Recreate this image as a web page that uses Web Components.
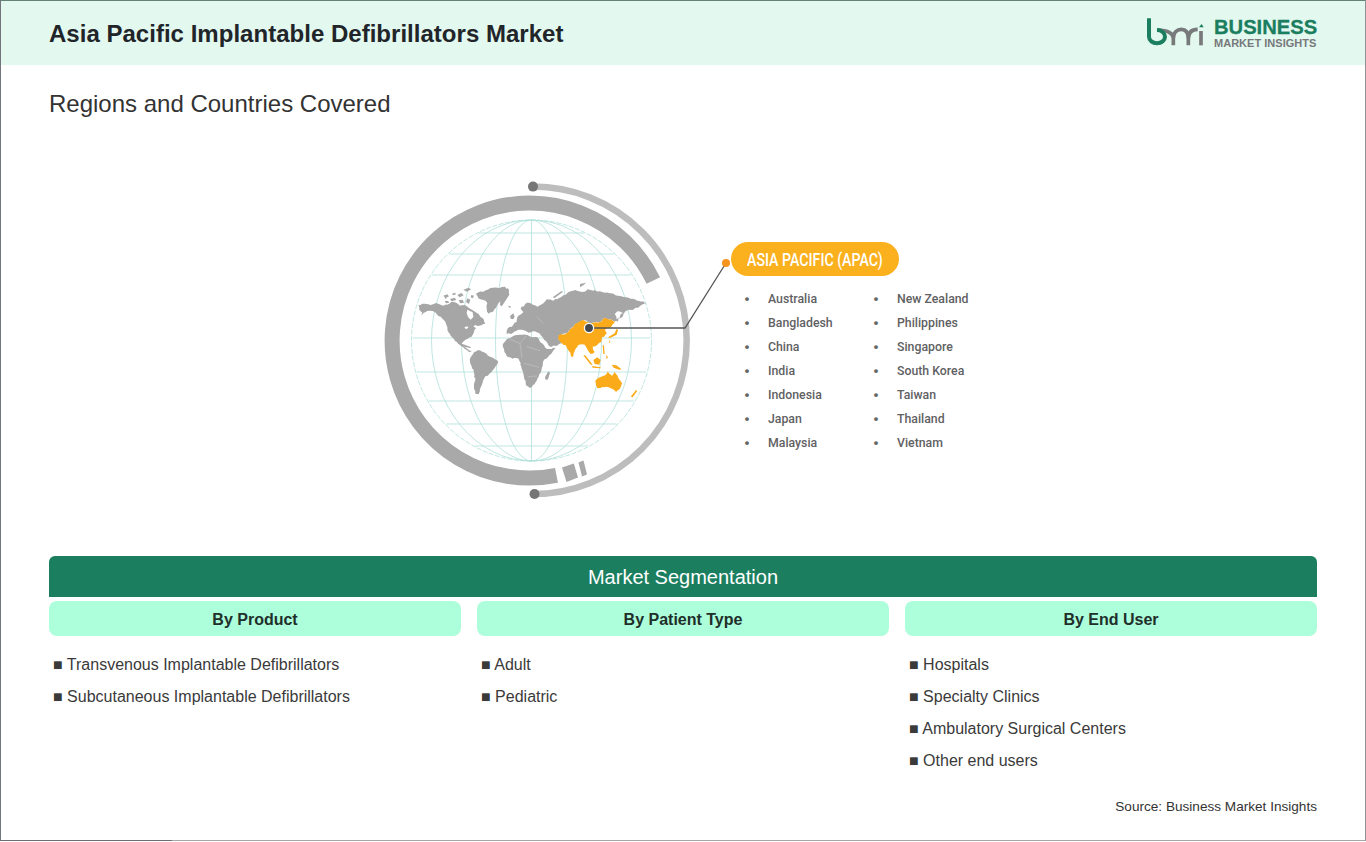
<!DOCTYPE html>
<html lang="en"><head><meta charset="utf-8"><title>Asia Pacific Implantable Defibrillators Market</title>
<style>html,body{margin:0;padding:0;background:#fff}body{font-family:"Liberation Sans",Arial,sans-serif}</style>
</head><body>
<report-app>
<report-header slot="header" title="Asia Pacific Implantable Defibrillators Market"></report-header>
<h-sub>Regions and Countries Covered</h-sub>
<region-map>
<span slot="pill">ASIA PACIFIC (APAC)</span>
<country-item>Australia</country-item><country-item>New Zealand</country-item>
<country-item>Bangladesh</country-item><country-item>Philippines</country-item>
<country-item>China</country-item><country-item>Singapore</country-item>
<country-item>India</country-item><country-item>South Korea</country-item>
<country-item>Indonesia</country-item><country-item>Taiwan</country-item>
<country-item>Japan</country-item><country-item>Thailand</country-item>
<country-item>Malaysia</country-item><country-item>Vietnam</country-item>
</region-map>
<seg-band>Market Segmentation</seg-band>
<seg-grid>
<seg-col heading="By Product"><seg-item>Transvenous Implantable Defibrillators</seg-item><seg-item>Subcutaneous Implantable Defibrillators</seg-item></seg-col>
<seg-col heading="By Patient Type"><seg-item>Adult</seg-item><seg-item>Pediatric</seg-item></seg-col>
<seg-col heading="By End User"><seg-item>Hospitals</seg-item><seg-item>Specialty Clinics</seg-item><seg-item>Ambulatory Surgical Centers</seg-item><seg-item>Other end users</seg-item></seg-col>
</seg-grid>
<source-note>Source: Business Market Insights</source-note>
</report-app>
<script>
function def(name, css, html){
  customElements.define(name, class extends HTMLElement{
    constructor(){super();const r=this.attachShadow({mode:'open'});
      r.innerHTML='<style>'+css+'</style>'+(typeof html==='function'?html(this):html);}
  });
}
def('report-app',`:host{display:block;box-sizing:border-box;width:1366px;height:842px;overflow:hidden;font-family:"Liberation Sans",Arial,sans-serif;color:#212529}
.f{position:relative;box-sizing:border-box;height:841px;border:1px solid #70767a;border-right-color:#8e9293;border-top-color:#66807a;border-bottom-color:#a4a8aa;display:flex;flex-direction:column}
.f::after{content:"";position:absolute;left:-1px;bottom:-1px;width:172px;height:1px;background:#6c7074}
.b{padding:0 48px;display:flex;flex-direction:column;flex:1}`,
`<div class="f"><slot name="header"></slot><div class="b"><slot></slot></div></div>`);

def('report-header',`:host{display:flex;align-items:center;justify-content:space-between;height:64px;background:#e3f8ef;padding:0 47px 0 48px;flex:none}
h1{margin:0;font-size:24px;line-height:32px;font-weight:700;color:#212529;position:relative;top:1px;letter-spacing:.02px}
.logo{display:flex;align-items:center;gap:9px}
.t{display:flex;flex-direction:column;width:104px;margin-top:-1px}
.a{font-size:20.2px;line-height:20px;font-weight:700;color:#1b7e5f;white-space:nowrap;-webkit-text-stroke:.3px #1b7e5f;position:relative;top:1px}
.c{font-size:11px;line-height:12px;font-weight:700;color:#77797b;white-space:nowrap;letter-spacing:.02px;margin-top:1px}
svg{display:block}`,
h=>`<h1>${h.getAttribute('title')}</h1><div class="logo">
<svg width="60" height="34" viewBox="0 0 180 102" fill="none">
<path d="M36 42C60 42 85 46 85 70V88M85 68C85 48 97 40 109 40S130 48 130 68V88M130 68C130 48 142 40 158 40" stroke="#77797b" stroke-width="11"/>
<path d="M168 45V88" stroke="#77797b" stroke-width="11"/>
<path d="M12 7V62A24 20 0 1 0 36 42" stroke="#1b7e5f" stroke-width="12"/>
<path d="M162 34L170 24L176 34Z" fill="#1b7e5f"/>
</svg><div class="t"><span class="a">BUSINESS</span><span class="c">MARKET INSIGHTS</span></div></div>`);

def('h-sub',`:host{display:block;font-size:24px;line-height:28px;height:28px;margin-top:25px;color:#333;flex:none}`,`<slot></slot>`);

const NA=[[25,90],[45,86],[62,90],[78,84],[100,92],[118,86],[128,80],[140,84],[150,92],[165,90],[178,100],[192,108],[205,116],[212,126],[222,135],[226,146],[208,152],[196,150],[190,154],[198,160],[192,172],[184,186],[172,192],[162,198],[155,205],[160,212],[172,222],[186,228],[178,232],[165,222],[150,210],[135,198],[122,182],[112,165],[106,140],[92,125],[72,110],[52,108],[40,114],[30,128],[36,112],[28,105]];
const GR=[[198,56],[220,50],[240,40],[262,38],[285,35],[298,44],[290,58],[272,78],[258,98],[246,112],[236,116],[230,100],[232,84],[218,74],[205,70]];
const SA=[[183,245],[192,232],[205,225],[222,232],[240,245],[264,258],[256,275],[244,292],[226,304],[218,322],[210,342],[206,358],[196,356],[192,336],[196,310],[186,280],[180,262]];
const AF=[[8,195],[20,178],[36,170],[58,164],[82,165],[100,172],[112,172],[126,190],[140,206],[166,204],[148,226],[134,238],[126,262],[116,290],[104,312],[90,324],[78,316],[72,290],[64,260],[56,236],[38,236],[20,228]];
const EU=[[20,152],[40,134],[50,126],[54,108],[70,96],[62,86],[80,68],[96,72],[112,80],[130,70],[140,58],[160,62],[190,46],[206,36],[226,30],[246,36],[262,28],[300,34],[330,40],[360,48],[392,56],[416,62],[442,70],[420,78],[402,88],[380,92],[372,100],[352,94],[344,102],[352,122],[345,124],[315,114],[300,126],[270,130],[250,120],[225,132],[200,160],[176,166],[176,180],[192,186],[170,198],[150,200],[128,172],[118,160],[104,154],[86,158],[70,150],[50,152],[34,162],[20,162]];
const AS=[[174,176],[176,166],[200,160],[225,132],[250,120],[270,130],[300,126],[315,114],[345,124],[330,144],[314,150],[320,160],[306,172],[304,186],[288,198],[278,200],[284,216],[272,222],[262,208],[254,194],[236,194],[226,208],[216,232],[206,212],[198,196],[180,186]];
const AU=[[286,302],[300,292],[316,286],[324,274],[336,288],[344,276],[354,292],[366,310],[360,326],[348,336],[336,326],[320,320],[292,324],[288,316]];
let seed=7;const rnd=()=>{seed=(seed*16807)%2147483647;return seed/2147483647-.5};
const rough=(p,amp=4.5)=>{const o=[];p.forEach((a,i)=>{const b=p[(i+1)%p.length];const n=Math.max(1,Math.round(Math.hypot(b[0]-a[0],b[1]-a[1])/7));
  for(let k=0;k<n;k++){const t=k/n;o.push([(a[0]+(b[0]-a[0])*t+(k?rnd()*amp:0)).toFixed(1),(a[1]+(b[1]-a[1])*t+(k?rnd()*amp:0)).toFixed(1)])}});return o.map(a=>a.join(',')).join(' ')};
let grid='';
[100,70,36].forEach(rx=>{grid+=`<ellipse cx="531.5" cy="340.5" rx="${rx}" ry="120.5"/>`});
grid+='<ellipse cx="531.5" cy="340.5" rx="120" ry="120.5" stroke-dasharray="5 1.5"/>';
grid+='<path d="M531.5 220V461"/>';
[233,254,275,338,372,401,424,446].forEach(y=>{
  const dy=y-340.5,w=Math.sqrt(120*120-dy*dy)*.99;
  grid+=`<path d="M${531.5-w} ${y}H${531.5+w}"/>`;
});
def('region-map',`:host{display:flex;flex:none;height:344px;margin-top:57px;padding-left:326px}
svg{display:block;flex:none;overflow:visible}
.r{padding-top:67px;width:300px}
.p{box-sizing:border-box;width:168px;height:34px;border-radius:17px;background:#fbb01d;color:#fff;display:flex;align-items:center;padding:1px 0 0 16px;font:500 17.5px/34px Roboto,"Liberation Sans",sans-serif;white-space:nowrap}
::slotted([slot=pill]){display:inline-block;transform:scaleX(.81);transform-origin:0 50%}
.g{display:grid;grid-template-columns:129px 129px;grid-auto-rows:24px;margin-top:11px;padding-left:13px}`,
`<svg width="356" height="344" viewBox="375 175 356 344" aria-hidden="true">
<g fill="none" stroke="#b4e1dc" stroke-width=".85">${grid}</g>
<path d="M653.3 280.5A137.5 137.5 0 1 0 556.5 475.4" fill="none" stroke="#a9a9a9" stroke-width="15"/>
<path d="M562 467.5L573.8 463.4L578 477.6L566.5 482Z" fill="#a9a9a9"/>
<path d="M578.5 462.5L583.5 460.6L587 474.6L582 476.6Z" fill="#a9a9a9"/>
<path d="M533 186.6A153.7 153.7 0 0 1 533 494" fill="none" stroke="#bdbdbd" stroke-width="6.5"/>
<circle cx="533" cy="186.6" r="5" fill="#767676"/><circle cx="534.5" cy="494" r="5" fill="#767676"/>
<g fill="#a6a6a6" transform="translate(410 275) scale(.3333)">
<polygon points="${rough(NA)}"/><polygon points="${rough(GR)}"/><polygon points="${rough(SA)}"/>
<path d="M100 62l12-4 5 6-10 5zM120 72l14-4 5 7-14 4zM142 60l12-6 7 7-12 6zM104 78l10 0 4 5-10 2zM160 44l16-6 7 5-12 7zM146 76l12-2 4 9-11 2zM172 70l9 4-4 13-9-6zM296 92l6 2-1 5-5-2zM126 56l9-3 3 5-9 3zM184 60l8 2-4 8-6-3zM104 66l5-1 1 5-5 1z"/>
<path d="M150 205l14 4 20 8-4 2-16-4z"/>
<path d="M172 104l16 8 2 14-8 8-8-8-4-12z" fill="#fff"/>
<path d="M163 157l9-3 3 4-7 5z" fill="#fff"/>
</g>
<g transform="translate(500 280) scale(.3333)">
<g fill="#a6a6a6"><polygon points="${rough(EU)}"/><polygon points="${rough(AF)}"/>
<path d="M135 292l10-18 5 4-6 20-7 2zM240 12l18-4-6 6-12 8zM158 52l28-20 2 4-24 18zM30 108l10-8 4 10-4 8-8-2zM2 40L24 24 28 44 6 78 0 76zM362 102l10-4-4 12-10 6z"/></g>
<path d="M30 178L60 190 78 168M60 190L66 234M80 200L120 212M72 250L118 262M84 290L112 288M110 110L130 130" fill="none" stroke="#fff" stroke-width="1.2" stroke-opacity=".55"/>
<g fill="#fbab19"><polygon points="${rough(AS)}"/><polygon points="${rough(AU,3)}"/>
<path d="M280 240l12-8 10 8-4 14-14-2zM250 226l6 0 22 28-6 0zM276 258l26 4 0 3-24-2zM335 254l14 2 16 12-8 1-16-6zM392 350l16-20 4 2-14 20zM354 150l-4 14-20 10-6-2 20-12 6-14zM308 196l4 0 2 26-4 0zM318 224l6 8-4 6zM328 176l3 14-3-2z"/></g>
<path d="M348 120l8-8-2 14z" fill="#a6a6a6"/>
</g>
<path d="M593 328H685L726 263" fill="none" stroke="#555" stroke-width="1.3"/>
<circle cx="589" cy="328" r="4.6" fill="#45494d" stroke="#fff" stroke-width="1.3"/>
<circle cx="726" cy="263" r="4" fill="#f7941d"/>
</svg>
<div class="r"><div class="p"><slot name="pill"></slot></div><div class="g"><slot></slot></div></div>`);

def('country-item',`:host{display:grid;grid-template-columns:24px 1fr;align-items:center;font:500 12.3px/24px Roboto,"Liberation Sans",sans-serif;color:#5f6163;white-space:nowrap}
i{font-style:normal;font-size:17px;color:#666}`,`<i>•</i><span><slot></slot></span>`);

def('seg-band',`:host{display:block;flex:none;box-sizing:border-box;height:41px;margin-top:37px;background:#1b7e5f;border-radius:6px 6px 0 0;color:#fff;text-align:center;font-size:20px;line-height:42px}`,`<slot></slot>`);
def('seg-grid',`:host{display:grid;grid-template-columns:repeat(3,412px);gap:16px;margin-top:4px;flex:none;height:196px}`,`<slot></slot>`);
def('seg-col',`:host{display:block}
h2{margin:0;height:35px;background:#adfedb;border-radius:8px;text-align:center;font-size:16px;line-height:38px;font-weight:700;color:#212f2a}
.l{display:flex;flex-direction:column;padding:13px 0 0 4px}`,
h=>`<h2>${h.getAttribute('heading')}</h2><div class="l"><slot></slot></div>`);
def('seg-item',`:host{display:block;font-size:16px;line-height:32px;height:32px;color:#3a3a3a;white-space:nowrap}`,`■ <slot></slot>`);
def('source-note',`:host{display:block;text-align:right;font-size:13.6px;line-height:20px;color:#333;flex:none}`,`<slot></slot>`);
</script>
</body></html>
